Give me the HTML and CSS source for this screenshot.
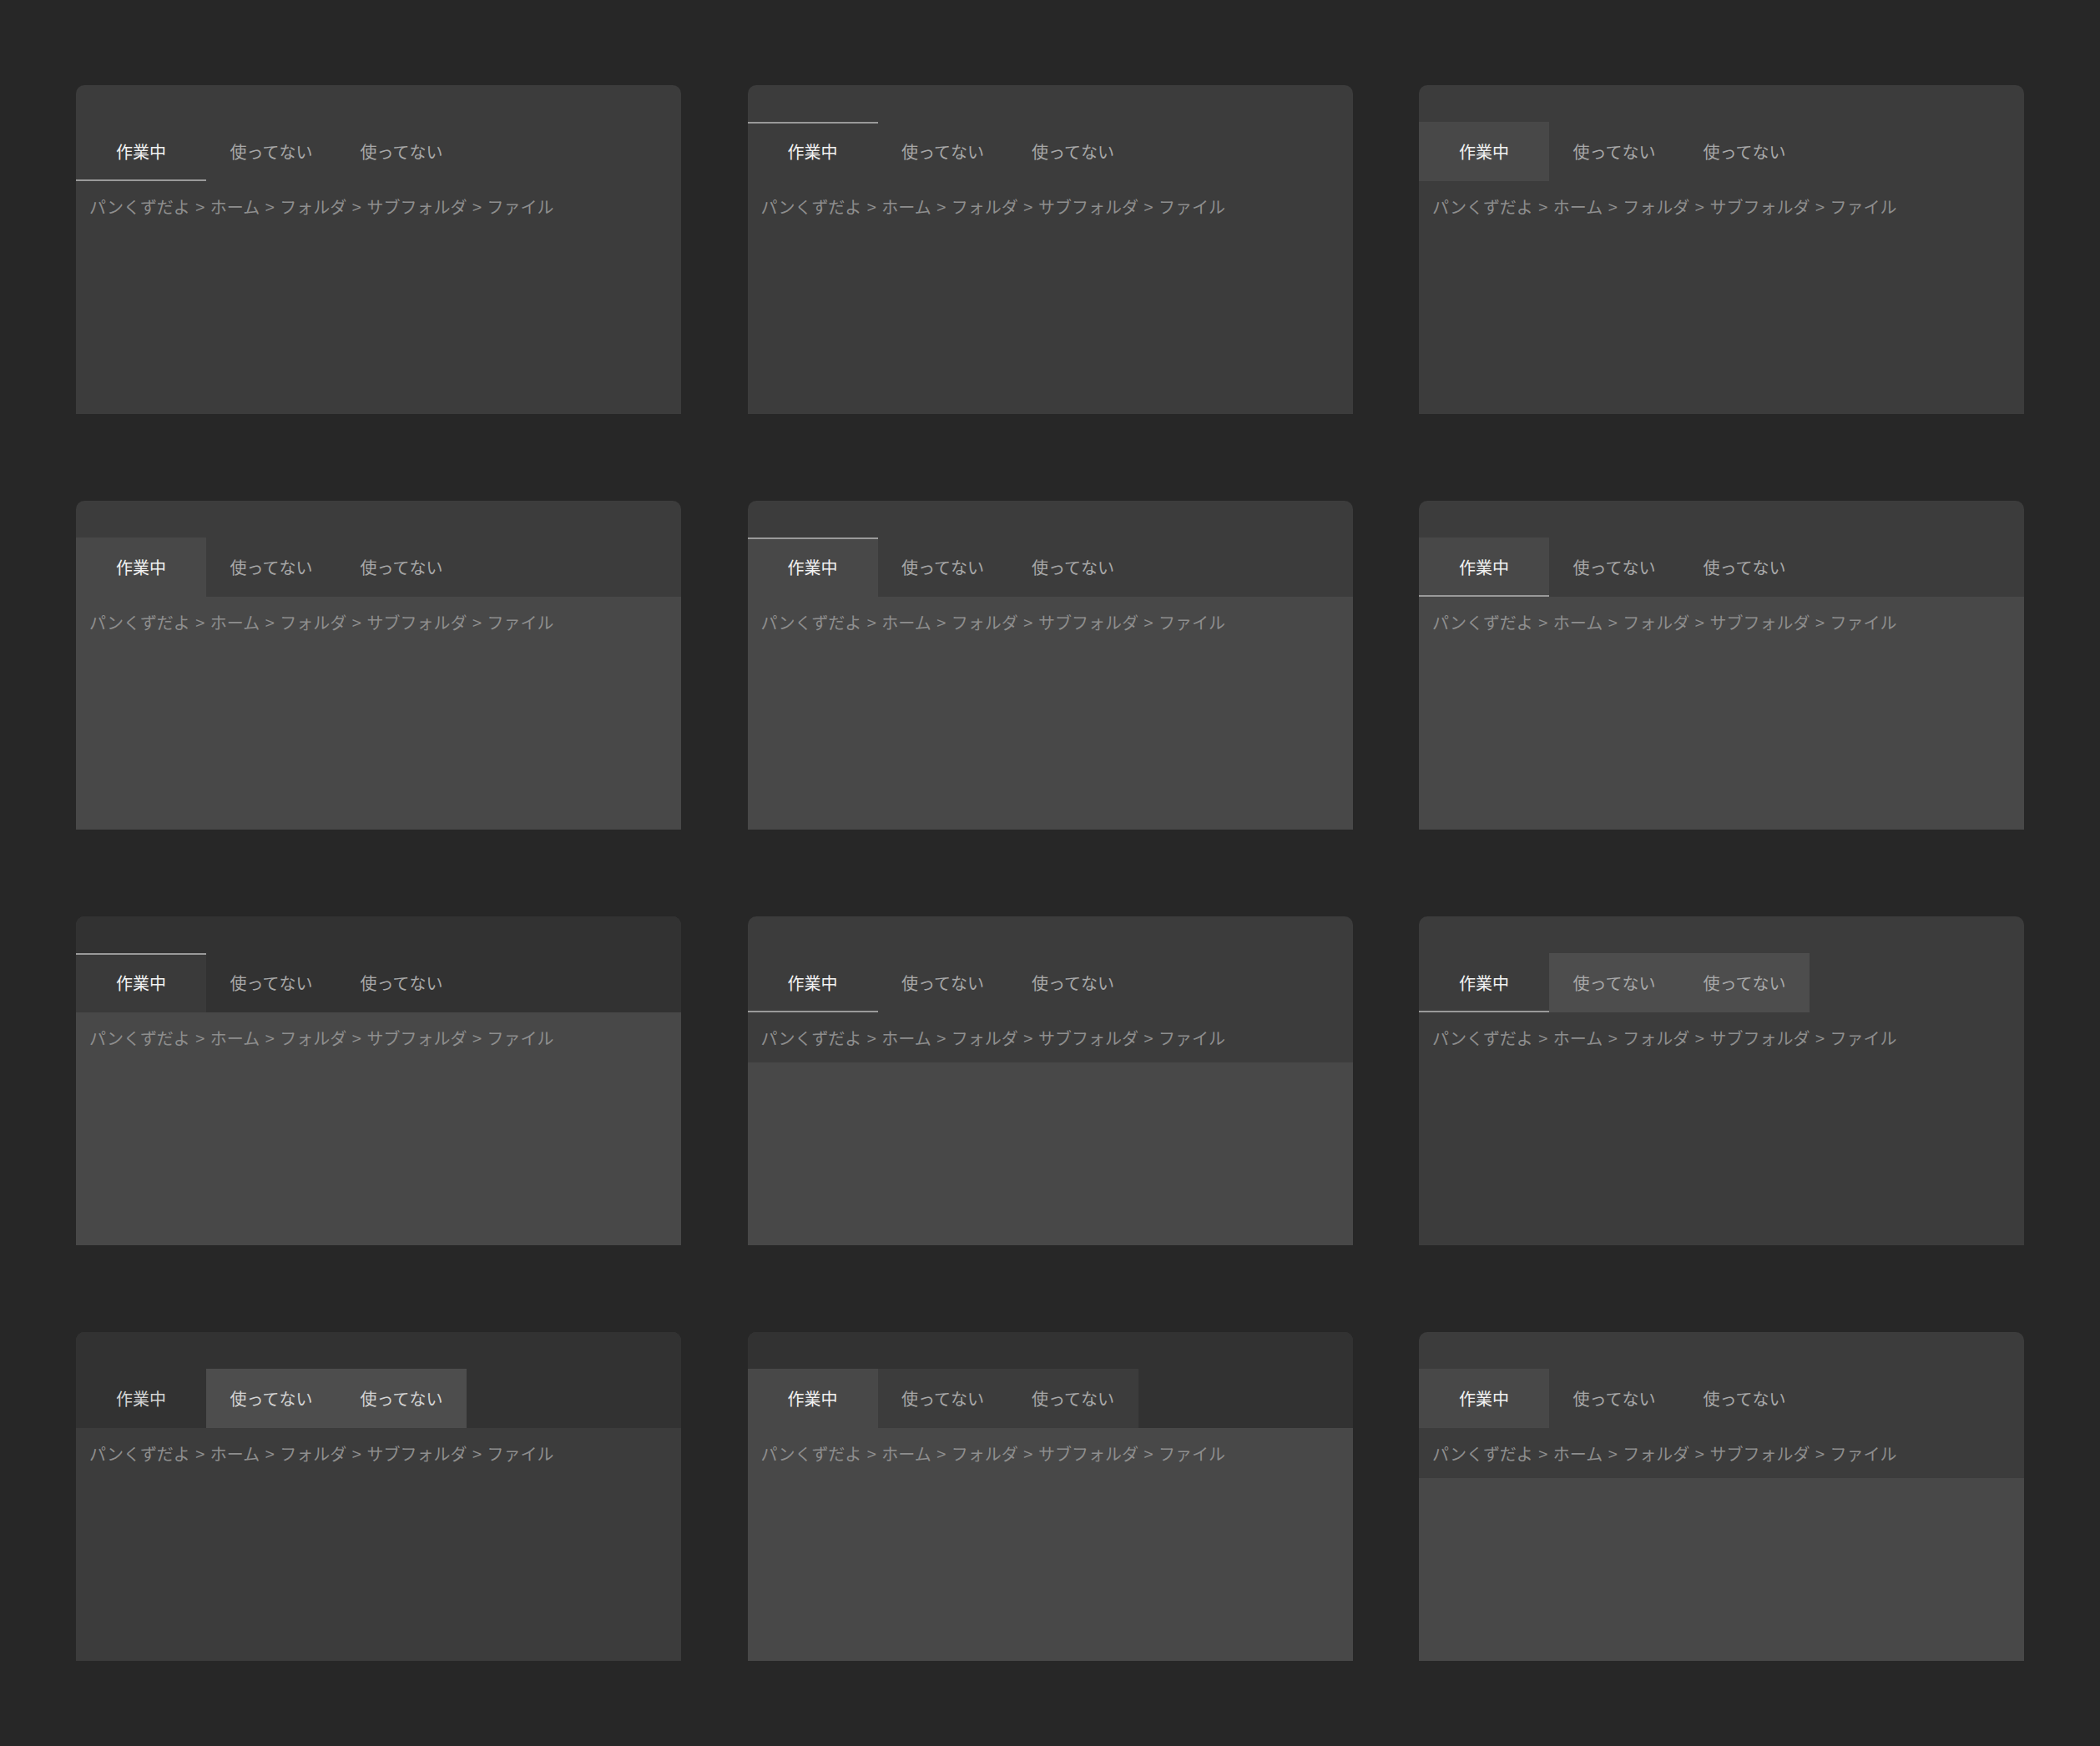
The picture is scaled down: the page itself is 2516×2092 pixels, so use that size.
FILE: index.html
```html
<!DOCTYPE html>
<html>

<head>
  <meta charset="utf-8">
  <meta name="viewport" content="width=device-width,initial-scale=1">
  <link rel="stylesheet" href="styles.css">
</head>

<body>
  <div class="grid">

    <!-- row 1 -->
    <div class="card under">
      <div class="tabs">
        <div class="tab active">作業中</div>
        <div class="tab">使ってない</div>
        <div class="tab">使ってない</div>
      </div>
      <div class="crumbs">パンくずだよ <span class="sep">&gt;</span> ホーム <span class="sep">&gt;</span> フォルダ <span class="sep">&gt;</span> サブフォルダ <span class="sep">&gt;</span> ファイル</div>
      <div class="pane"></div>
    </div>

    <div class="card over">
      <div class="tabs">
        <div class="tab active">作業中</div>
        <div class="tab">使ってない</div>
        <div class="tab">使ってない</div>
      </div>
      <div class="crumbs">パンくずだよ <span class="sep">&gt;</span> ホーム <span class="sep">&gt;</span> フォルダ <span class="sep">&gt;</span> サブフォルダ <span class="sep">&gt;</span> ファイル</div>
      <div class="pane"></div>
    </div>

    <div class="card fill">
      <div class="tabs">
        <div class="tab active">作業中</div>
        <div class="tab">使ってない</div>
        <div class="tab">使ってない</div>
      </div>
      <div class="crumbs">パンくずだよ <span class="sep">&gt;</span> ホーム <span class="sep">&gt;</span> フォルダ <span class="sep">&gt;</span> サブフォルダ <span class="sep">&gt;</span> ファイル</div>
      <div class="pane"></div>
    </div>

    <!-- row 2 -->
    <div class="card split fill">
      <div class="tabs">
        <div class="tab active">作業中</div>
        <div class="tab">使ってない</div>
        <div class="tab">使ってない</div>
      </div>
      <div class="crumbs">パンくずだよ <span class="sep">&gt;</span> ホーム <span class="sep">&gt;</span> フォルダ <span class="sep">&gt;</span> サブフォルダ <span class="sep">&gt;</span> ファイル</div>
      <div class="pane"></div>
    </div>

    <div class="card split fill over">
      <div class="tabs">
        <div class="tab active">作業中</div>
        <div class="tab">使ってない</div>
        <div class="tab">使ってない</div>
      </div>
      <div class="crumbs">パンくずだよ <span class="sep">&gt;</span> ホーム <span class="sep">&gt;</span> フォルダ <span class="sep">&gt;</span> サブフォルダ <span class="sep">&gt;</span> ファイル</div>
      <div class="pane"></div>
    </div>

    <div class="card split fill under">
      <div class="tabs">
        <div class="tab active">作業中</div>
        <div class="tab">使ってない</div>
        <div class="tab">使ってない</div>
      </div>
      <div class="crumbs">パンくずだよ <span class="sep">&gt;</span> ホーム <span class="sep">&gt;</span> フォルダ <span class="sep">&gt;</span> サブフォルダ <span class="sep">&gt;</span> ファイル</div>
      <div class="pane"></div>
    </div>

    <!-- row 3 -->
    <div class="card dark split dim over">
      <div class="tabs">
        <div class="tab active">作業中</div>
        <div class="tab">使ってない</div>
        <div class="tab">使ってない</div>
      </div>
      <div class="crumbs">パンくずだよ <span class="sep">&gt;</span> ホーム <span class="sep">&gt;</span> フォルダ <span class="sep">&gt;</span> サブフォルダ <span class="sep">&gt;</span> ファイル</div>
      <div class="pane"></div>
    </div>

    <div class="card deep under">
      <div class="tabs">
        <div class="tab active">作業中</div>
        <div class="tab">使ってない</div>
        <div class="tab">使ってない</div>
      </div>
      <div class="crumbs">パンくずだよ <span class="sep">&gt;</span> ホーム <span class="sep">&gt;</span> フォルダ <span class="sep">&gt;</span> サブフォルダ <span class="sep">&gt;</span> ファイル</div>
      <div class="pane"></div>
    </div>

    <div class="card chip under">
      <div class="tabs">
        <div class="tab active">作業中</div>
        <div class="tab">使ってない</div>
        <div class="tab">使ってない</div>
      </div>
      <div class="crumbs">パンくずだよ <span class="sep">&gt;</span> ホーム <span class="sep">&gt;</span> フォルダ <span class="sep">&gt;</span> サブフォルダ <span class="sep">&gt;</span> ファイル</div>
      <div class="pane"></div>
    </div>

    <!-- row 4 -->
    <div class="card dark chip bright">
      <div class="tabs">
        <div class="tab active">作業中</div>
        <div class="tab">使ってない</div>
        <div class="tab">使ってない</div>
      </div>
      <div class="crumbs">パンくずだよ <span class="sep">&gt;</span> ホーム <span class="sep">&gt;</span> フォルダ <span class="sep">&gt;</span> サブフォルダ <span class="sep">&gt;</span> ファイル</div>
      <div class="pane"></div>
    </div>

    <div class="card dark split fill soft">
      <div class="tabs">
        <div class="tab active">作業中</div>
        <div class="tab">使ってない</div>
        <div class="tab">使ってない</div>
      </div>
      <div class="crumbs">パンくずだよ <span class="sep">&gt;</span> ホーム <span class="sep">&gt;</span> フォルダ <span class="sep">&gt;</span> サブフォルダ <span class="sep">&gt;</span> ファイル</div>
      <div class="pane"></div>
    </div>

    <div class="card deep fill">
      <div class="tabs">
        <div class="tab active">作業中</div>
        <div class="tab">使ってない</div>
        <div class="tab">使ってない</div>
      </div>
      <div class="crumbs">パンくずだよ <span class="sep">&gt;</span> ホーム <span class="sep">&gt;</span> フォルダ <span class="sep">&gt;</span> サブフォルダ <span class="sep">&gt;</span> ファイル</div>
      <div class="pane"></div>
    </div>

  </div>
</body>

</html>
```

FILE: styles.css
```css
/* Page */

body {
  margin: 0;
  background-color: #272727;
  font-family: "Noto Sans CJK JP", "Noto Sans", sans-serif;
}

.grid {
  display: grid;
  grid-template-columns: repeat(3, 725px);
  grid-auto-rows: 394px;
  column-gap: 79.5px;
  row-gap: 104px;
  padding: 102px 91px;
}

/* Card */

.card {
  display: flex;
  flex-direction: column;
  background-color: #3c3c3c;
  border-radius: 10px 10px 0 0;
  overflow: hidden;
}

.tabs {
  display: flex;
  padding-top: 44px;
}

.tab {
  width: 156px;
  height: 71px;
  display: flex;
  align-items: center;
  justify-content: center;
  font-size: 20px;
  color: #a8a8a8;
}

.tab.active {
  color: #f2f2f2;
}

.crumbs {
  height: 60px;
  padding-left: 16px;
  display: flex;
  align-items: center;
  font-size: 20px;
  color: #8e8e8e;
  white-space: pre;
}

.crumbs .sep {
  margin: 0 2px;
}

.pane {
  flex: 1;
}

/* Active tab lines */

.under .tab.active {
  box-shadow: inset 0 -2px #9a9a9a;
}

.over .tab.active {
  box-shadow: inset 0 2px #9a9a9a;
}

/* Backgrounds */

.fill .tab.active {
  background-color: #484848;
}

.dim .tab.active {
  background-color: #3a3a3a;
}

.split .crumbs,
.split .pane,
.deep .pane {
  background-color: #484848;
}

.dark .tabs {
  background-color: #323232;
}

.chip .tab:not(.active) {
  background-color: #4d4d4d;
}

.soft .tab:not(.active) {
  background-color: #3c3c3c;
}

.bright .tab,
.bright .tab.active {
  color: #d4d4d4;
}
```
